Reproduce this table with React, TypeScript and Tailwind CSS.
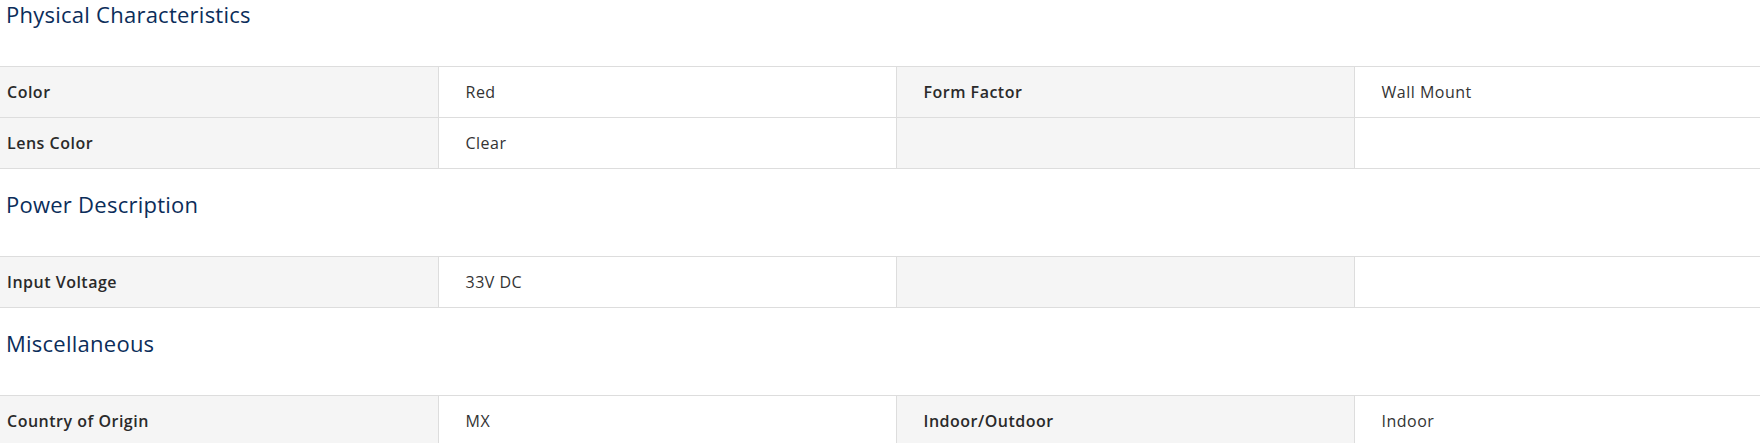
import React from 'react'

type Row = [string, string, string, string]

const sections: { title: string; rows: Row[] }[] = [
  {
    title: 'Physical Characteristics',
    rows: [
      ['Color', 'Red', 'Form Factor', 'Wall Mount'],
      ['Lens Color', 'Clear', '', ''],
    ],
  },
  {
    title: 'Power Description',
    rows: [['Input Voltage', '33V DC', '', '']],
  },
  {
    title: 'Miscellaneous',
    rows: [['Country of Origin', 'MX', 'Indoor/Outdoor', 'Indoor']],
  },
]

function SpecTable({ rows }: { rows: Row[] }) {
  return (
    <table className="-ml-[20px] w-[1832px] table-fixed border-collapse">
      <tbody>
        {rows.map((r, i) => (
          <tr key={i} className="h-[51px] border-y border-[#dddddd] text-[16px] tracking-[0.5px]">
            <td className="bg-[#f5f5f5] border-r border-[#dddddd] pl-[27px] font-semibold text-[#2a2a2a]">{r[0]}</td>
            <td className="bg-white border-r border-[#dddddd] pl-[27px] text-[#333333]">{r[1]}</td>
            <td className="bg-[#f5f5f5] border-r border-[#dddddd] pl-[27px] font-semibold text-[#2a2a2a]">{r[2]}</td>
            <td className="bg-white pl-[27px] text-[#333333]">{r[3]}</td>
          </tr>
        ))}
      </tbody>
    </table>
  )
}

export default function App() {
  return (
    <div className="w-[1760px] h-[443px] overflow-hidden bg-white font-['Open_Sans','Lato',sans-serif]">
      {sections.map((s, idx) => (
        <div key={s.title}>
          <h2
            className={`pl-[6px] text-[22px] leading-[28px] tracking-[0.25px] text-[#0b2d5a] mb-[38px] ${idx === 0 ? 'mt-0' : 'mt-[21px]'}`}
          >
            {s.title}
          </h2>
          <SpecTable rows={s.rows} />
        </div>
      ))}
    </div>
  )
}
